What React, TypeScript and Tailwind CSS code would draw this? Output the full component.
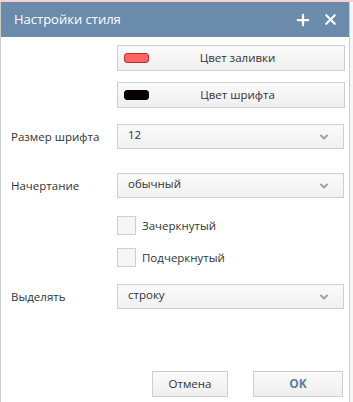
import { Plus, X, ChevronDown } from "lucide-react";

const font = { fontFamily: '"Open Sans", "Noto Sans", sans-serif' };

function Select({ value }: { value: string }) {
  return (
    <div className="flex h-[25px] w-[227px] items-center justify-between border border-[#cfcfcf] bg-gradient-to-b from-[#fafafa] to-[#f1f1f1] pl-[10px] pr-[13px] text-[11.5px] text-[#333]">
      <span className="-mt-[3px]">{value}</span>
      <ChevronDown className="h-[12px] w-[12px] text-[#a0a0a0]" strokeWidth={4} />
    </div>
  );
}

function Checkbox({ label }: { label: string }) {
  return (
    <div className="flex items-center gap-[6px]">
      <div className="h-[19px] w-[19px] border border-[#cfcfcf] bg-[#f6f6f6]" />
      <span className="text-[11.5px] text-[#333]">{label}</span>
    </div>
  );
}

export default function App() {
  return (
    <div className="h-[402px] w-[353px] overflow-hidden bg-[#f4f8f4]" style={font}>
      <div className="h-[2px] bg-[#f3d3d3]" />
      <div className="flex h-[400px] w-[350px] flex-col border-x border-[#cccccc] bg-white">
        {/* header */}
        <div className="flex h-[35px] items-center justify-between bg-[#6a8bab] pl-[13px] pr-[10px] text-white">
          <span className="text-[13px]">Настройки стиля</span>
          <div className="flex items-center gap-[10px]">
            <Plus className="h-[18px] w-[18px]" strokeWidth={3} />
            <X className="h-[17px] w-[17px]" strokeWidth={3} />
          </div>
        </div>

        {/* body */}
        <div className="flex flex-1 flex-col pl-[10px]">
          <div className="mt-[8px] flex flex-col gap-[11px] pl-[106px]">
            <button className="flex h-[26px] w-[228px] items-center border border-[#cfcfcf] bg-gradient-to-b from-[#fafafa] to-[#efefef] pl-[6px] text-[11.5px] text-[#333]">
              <span className="h-[10px] w-[25px] rounded-[3px] border border-[#a33] bg-[#ff6464]" />
              <span className="flex-1 pr-[18px] text-center">Цвет заливки</span>
            </button>
            <button className="flex h-[26px] w-[228px] items-center border border-[#cfcfcf] bg-gradient-to-b from-[#fafafa] to-[#efefef] pl-[6px] text-[11.5px] text-[#333]">
              <span className="h-[10px] w-[25px] rounded-[3px] border border-black bg-[#080000]" />
              <span className="flex-1 pr-[18px] text-center">Цвет шрифта</span>
            </button>
          </div>

          <div className="mt-[16px] flex items-center">
            <span className="w-[106px] text-[11.5px] text-[#333]">Размер шрифта</span>
            <Select value="12" />
          </div>

          <div className="mt-[24px] flex items-center">
            <span className="w-[106px] text-[11.5px] text-[#333]">Начертание</span>
            <Select value="обычный" />
          </div>

          <div className="mt-[18px] flex flex-col gap-[13px] pl-[106px]">
            <Checkbox label="Зачеркнутый" />
            <Checkbox label="Подчеркнутый" />
          </div>

          <div className="mt-[17px] flex items-center">
            <span className="w-[106px] text-[11.5px] text-[#333]">Выделять</span>
            <Select value="строку" />
          </div>

          <div className="mt-auto mb-[5px] flex justify-end gap-[25px] pr-[6px]">
            <button className="h-[26px] w-[76px] border border-[#cfcfcf] bg-gradient-to-b from-[#fafafa] to-[#efefef] text-[11.5px] text-[#333]">
              Отмена
            </button>
            <button className="h-[26px] w-[90px] border border-[#cfcfcf] bg-gradient-to-b from-[#fafafa] to-[#efefef] text-[12px] font-bold text-[#5b7fa5]">
              OK
            </button>
          </div>
        </div>
      </div>
    </div>
  );
}
